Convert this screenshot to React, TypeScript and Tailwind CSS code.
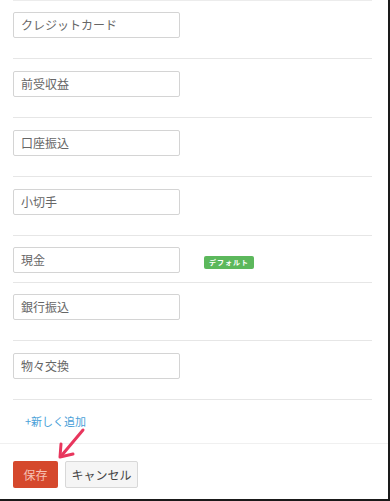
import React from "react";

const items = [
  { label: "クレジットカード", pt: "pt-[11px]", pb: "pb-[20px]" },
  { label: "前受収益", pt: "pt-[12px]", pb: "pb-[20px]" },
  { label: "口座振込", pt: "pt-[12px]", pb: "pb-[20px]" },
  { label: "小切手", pt: "pt-[12px]", pb: "pb-[20px]" },
  { label: "現金", pt: "pt-[11px]", pb: "pb-[9px]", badge: true },
  { label: "銀行振込", pt: "pt-[11px]", pb: "pb-[20px]" },
  { label: "物々交換", pt: "pt-[12px]", pb: "pb-[20px]" },
];

export default function App() {
  return (
    <div
      className="relative w-[390px] h-[501px] bg-white border-r-2 border-b-2 border-[#1a1a1a] overflow-hidden"
      style={{ fontFamily: '"Noto Sans CJK JP", "Liberation Sans", sans-serif' }}
    >
      <div className="pl-[13px] pr-[16px]">
        <ul className="border-t border-[#ececec]">
          {items.map((it) => (
            <li
              key={it.label}
              className={`flex items-center border-b border-[#e6e6e6] ${it.pt} ${it.pb}`}
            >
              <div className="w-[167px] h-[26px] border border-[#d4d4d4] rounded-[2px] flex items-center px-[7px] text-[12px] text-[#666] leading-none">
                {it.label}
              </div>
              {it.badge && (
                <span className="ml-[24px] mt-[4px] h-[13px] w-[50px] rounded-[2px] bg-[#5cb85c] text-white text-[7px] font-bold flex items-center justify-center leading-none tracking-[1px]">
                  デフォルト
                </span>
              )}
            </li>
          ))}
        </ul>
        <div className="h-[43px] flex items-center pl-[12px] text-[11px] text-[#4a9fd8]">
          +新しく追加
        </div>
      </div>
      <div className="border-t border-[#f0f0f0] pt-[17px] pl-[13px] flex gap-[7px]">
        <button className="w-[45px] h-[27px] rounded-[2px] bg-[#d5482c] text-[#f6c2b4] text-[12px] flex items-center justify-center">
          保存
        </button>
        <button className="w-[73px] h-[27px] rounded-[2px] bg-[#f5f5f5] border border-[#d8d8d8] text-[#444] text-[12px] flex items-center justify-center">
          キャンセル
        </button>
      </div>
      <svg
        className="absolute left-0 top-0 pointer-events-none"
        width="390"
        height="501"
        viewBox="0 0 390 501"
      >
        <line x1="83" y1="430" x2="62" y2="455" stroke="#e8365d" strokeWidth="3" strokeLinecap="round" />
        <polyline
          points="61,444 60,457 73,454"
          fill="none"
          stroke="#e8365d"
          strokeWidth="3"
          strokeLinecap="round"
          strokeLinejoin="round"
        />
      </svg>
    </div>
  );
}
